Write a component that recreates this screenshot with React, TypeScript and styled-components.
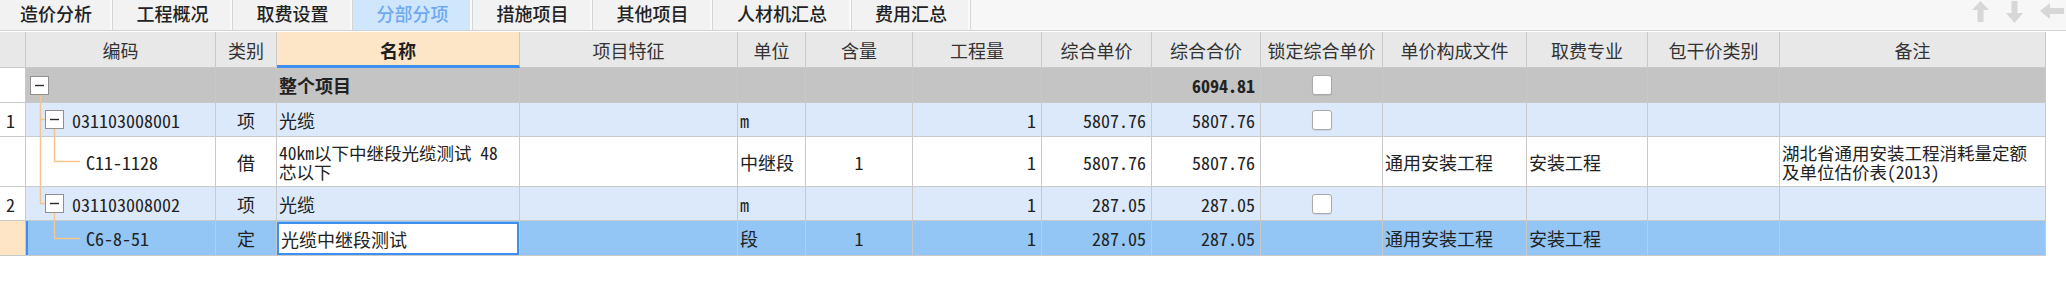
import React from 'react';
import styled, { createGlobalStyle } from 'styled-components';

const GlobalStyle = createGlobalStyle`
  html, body { margin: 0; padding: 0; background: #ffffff; }
  body { font-family: "Noto Sans CJK SC", "Noto Sans", sans-serif; }
`;

const COLS = [26, 190, 61, 243, 218, 68, 107, 129, 110, 109, 122, 144, 121, 132, 266];
const GRID = COLS.map((c) => `${c}px`).join(' ');

const DATA_FONT = `"Noto Sans Mono CJK SC", "Noto Sans CJK SC", "Liberation Mono", monospace`;
const LINE = '#c9c9c9';
const TREE = '#f7c48c';

const Page = styled.div`
  width: 2066px;
  height: 285px;
  overflow: hidden;
  background: #fff;
`;

const TabBar = styled.div`
  display: flex;
  align-items: stretch;
  height: 30px;
  background: #f7f7f7;
  border-bottom: 1px solid #d2d2d2;
`;

const Tab = styled.div<{ $w: number; $active?: boolean }>`
  box-sizing: border-box;
  width: ${(p) => p.$w}px;
  display: flex;
  align-items: center;
  justify-content: center;
  padding-bottom: 5px;
  font-size: 18px;
  font-weight: 500;
  color: ${(p) => (p.$active ? '#6fa9f2' : '#222')};
  background: ${(p) => (p.$active ? '#cfe6fd' : '#f2f2f2')};
  border-right: 1px solid #d6d6d6;
  box-shadow: inset -2px 0 0 #fafafa;
`;

const Arrows = styled.div`
  margin-left: auto;
  display: flex;
  align-items: flex-start;
  gap: 17px;
  padding-top: 1px;
  margin-right: 2px;
`;

const Table = styled.div`
  margin-top: 1px;
  width: 2046px;
  display: flex;
  flex-direction: column;
`;

const Row = styled.div<{ $h: number; $bg: string }>`
  display: grid;
  grid-template-columns: ${GRID};
  height: ${(p) => p.$h}px;
  background: ${(p) => p.$bg};
`;

const HeadCell = styled.div<{ $hot?: boolean }>`
  box-sizing: border-box;
  display: flex;
  align-items: center;
  justify-content: center;
  font-size: 18px;
  color: ${(p) => (p.$hot ? '#1f1f1f' : '#333')};
  font-weight: ${(p) => (p.$hot ? 700 : 400)};
  background: ${(p) => (p.$hot ? '#fde6c8' : '#e8e8e8')};
  border-right: 1px solid ${LINE};
  border-bottom: ${(p) => (p.$hot ? '3px solid #3d8ff0' : `1px solid ${LINE}`)};
  padding-top: ${(p) => (p.$hot ? 2 : 0)}px;
  white-space: nowrap;
`;

const BaseCell = styled.div`
  box-sizing: border-box;
  display: flex;
  align-items: center;
  min-width: 0;
  overflow: hidden;
  white-space: nowrap;
  border-right: 1px solid ${LINE};
  border-bottom: 1px solid ${LINE};
  font-family: ${DATA_FONT};
  font-size: 18px;
  color: #222;
`;

const NumCell = styled(BaseCell)<{ $sel?: boolean }>`
  background: ${(p) => (p.$sel ? '#fde5c6' : '#ffffff')};
  padding-left: 6px;
`;

const CodeCell = styled(BaseCell)<{ $sel?: boolean }>`
  align-items: stretch;
  box-shadow: ${(p) => (p.$sel ? 'inset 2px 0 0 #3d8ff0' : 'none')};
`;

const CodeText = styled.span`
  align-self: center;
  margin-left: 2px;
`;

const TextCell = styled(BaseCell)<{ $bold?: boolean }>`
  justify-content: flex-start;
  padding-left: 2px;
  font-weight: ${(p) => (p.$bold ? 700 : 400)};
`;

const CenterCell = styled(BaseCell)`
  justify-content: center;
`;

const NumberCell = styled(BaseCell)<{ $bold?: boolean }>`
  justify-content: flex-end;
  padding-right: 5px;
  font-weight: ${(p) => (p.$bold ? 700 : 400)};
`;

const EditCell = styled(BaseCell)`
  align-items: stretch;
  padding: 1px 0 0 0;
`;

const EditBox = styled.div`
  flex: 1;
  box-sizing: border-box;
  display: flex;
  align-items: center;
  padding-left: 2px;
  background: #ffffff;
  border: 2px solid #3d8ff0;
`;

const Lines = styled.div`
  display: flex;
  flex-direction: column;
  white-space: nowrap;
`;

const Line = styled.span`
  display: block;
  height: 19px;
  line-height: 19px;
  font-size: 17.5px;
`;

const Check = styled.div`
  box-sizing: border-box;
  width: 20px;
  height: 20px;
  border: 1px solid #a9a9a9;
  border-radius: 3px;
  background: #ffffff;
  box-shadow: 0 1px 1px rgba(0, 0, 0, 0.08);
`;

type TreeKind = 'root' | 'l1first' | 'child' | 'l1last' | 'childLast';

const Box: React.FC<{ x: number; y: number }> = ({ x, y }) => (
  <g>
    <rect x={x + 0.5} y={y + 0.5} width={18} height={18} fill="#fff" stroke="#8f8f8f" />
    <line x1={x + 5} y1={y + 9.5} x2={x + 14} y2={y + 9.5} stroke="#2a2a2a" strokeWidth={1.4} />
  </g>
);

const TreeGlyph: React.FC<{ kind: TreeKind; h: number; w: number }> = ({ kind, h, w }) => {
  const c = Math.round(h / 2) - 1;
  const V = (x: number, y1: number, y2: number) => (
    <line x1={x + 0.5} y1={y1} x2={x + 0.5} y2={y2} stroke={TREE} strokeWidth={1.5} />
  );
  const H = (x1: number, x2: number, y: number) => (
    <line x1={x1} y1={y + 0.5} x2={x2} y2={y + 0.5} stroke={TREE} strokeWidth={1.5} />
  );
  return (
    <svg width={w} height={h - 1} viewBox={`0 0 ${w} ${h - 1}`} style={{ flex: 'none' }}>
      {kind === 'root' && (
        <>
          {V(14, c + 9, h)}
          <Box x={4} y={c - 9} />
        </>
      )}
      {kind === 'l1first' && (
        <>
          {V(14, 0, h)}
          {H(14, 19, c)}
          {V(28, c + 9, h)}
          <Box x={19} y={c - 9} />
        </>
      )}
      {kind === 'child' && (
        <>
          {V(14, 0, h)}
          {V(28, 0, c)}
          {H(28, 54, c)}
        </>
      )}
      {kind === 'l1last' && (
        <>
          {V(14, 0, c)}
          {H(14, 19, c)}
          {V(28, c + 9, h)}
          <Box x={19} y={c - 9} />
        </>
      )}
      {kind === 'childLast' && (
        <>
          {V(28, 0, c)}
          {H(28, 54, c)}
        </>
      )}
    </svg>
  );
};

const ArrowUp = () => (
  <svg width="17" height="21" viewBox="0 0 17 21">
    <polygon points="8.5,0 17,9 11.5,9 11.5,21 5.5,21 5.5,9 0,9" fill="#d7d7d7" />
  </svg>
);
const ArrowDown = () => (
  <svg width="17" height="22" viewBox="0 0 17 22">
    <polygon points="5.5,0 11.5,0 11.5,12 17,12 8.5,22 0,12 5.5,12" fill="#d7d7d7" />
  </svg>
);
const ArrowLeft = () => (
  <svg width="24" height="20" viewBox="0 0 24 20" style={{ marginTop: 2 }}>
    <polygon points="0,8 10,0 10,5 24,5 24,11 10,11 10,16" fill="#d7d7d7" />
  </svg>
);

const TABS: { label: string; w: number; active?: boolean }[] = [
  { label: '造价分析', w: 113 },
  { label: '工程概况', w: 120 },
  { label: '取费设置', w: 120 },
  { label: '分部分项', w: 120, active: true },
  { label: '措施项目', w: 120 },
  { label: '其他项目', w: 120 },
  { label: '人材机汇总', w: 139 },
  { label: '费用汇总', w: 119 },
];

const HEADERS = [
  '', '编码', '类别', '名称', '项目特征', '单位', '含量', '工程量', '综合单价', '综合合价',
  '锁定综合单价', '单价构成文件', '取费专业', '包干价类别', '备注',
];

type RowData = {
  h: number;
  bg: string;
  num: string;
  tree: TreeKind;
  treeW: number;
  code: string;
  type: string;
  name: string | string[];
  bold?: boolean;
  unit: string;
  content: string;
  qty: string;
  price: string;
  total: string;
  lock: boolean;
  file: string;
  major: string;
  note: string | string[];
  selected?: boolean;
};

const ROWS: RowData[] = [
  {
    h: 35, bg: '#c4c4c4', num: '', tree: 'root', treeW: 60, code: '', type: '', name: '整个项目', bold: true,
    unit: '', content: '', qty: '', price: '', total: '6094.81', lock: true, file: '', major: '', note: '',
  },
  {
    h: 34, bg: '#dce9fb', num: '1', tree: 'l1first', treeW: 44, code: '031103008001', type: '项', name: '光缆',
    unit: 'm', content: '', qty: '1', price: '5807.76', total: '5807.76', lock: true, file: '', major: '', note: '',
  },
  {
    h: 50, bg: '#ffffff', num: '', tree: 'child', treeW: 58, code: 'C11-1128', type: '借',
    name: ['40km以下中继段光缆测试 48', '芯以下'], unit: '中继段', content: '1', qty: '1', price: '5807.76',
    total: '5807.76', lock: false, file: '通用安装工程', major: '安装工程',
    note: ['湖北省通用安装工程消耗量定额', '及单位估价表(2013)'],
  },
  {
    h: 34, bg: '#dce9fb', num: '2', tree: 'l1last', treeW: 44, code: '031103008002', type: '项', name: '光缆',
    unit: 'm', content: '', qty: '1', price: '287.05', total: '287.05', lock: true, file: '', major: '', note: '',
  },
  {
    h: 35, bg: '#93c6f5', num: '', tree: 'childLast', treeW: 58, code: 'C6-8-51', type: '定', name: '光缆中继段测试',
    unit: '段', content: '1', qty: '1', price: '287.05', total: '287.05', lock: false, file: '通用安装工程',
    major: '安装工程', note: '', selected: true,
  },
];

const renderText = (v: string | string[]) =>
  Array.isArray(v) ? (
    <Lines>
      {v.map((line, i) => (
        <Line key={i}>{line}</Line>
      ))}
    </Lines>
  ) : (
    v
  );

export default function App() {
  return (
    <Page>
      <GlobalStyle />
      <TabBar>
        {TABS.map((t) => (
          <Tab key={t.label} $w={t.w} $active={t.active}>
            {t.label}
          </Tab>
        ))}
        <Arrows>
          <ArrowUp />
          <ArrowDown />
          <ArrowLeft />
        </Arrows>
      </TabBar>
      <Table>
        <Row $h={36} $bg="#e8e8e8">
          {HEADERS.map((h, i) => (
            <HeadCell key={i} $hot={h === '名称'}>
              {h}
            </HeadCell>
          ))}
        </Row>
        {ROWS.map((r, i) => (
          <Row key={i} $h={r.h} $bg={r.bg}>
            <NumCell $sel={r.selected}>{r.num}</NumCell>
            <CodeCell $sel={r.selected}>
              <TreeGlyph kind={r.tree} h={r.h} w={r.treeW} />
              {r.code && <CodeText>{r.code}</CodeText>}
            </CodeCell>
            <CenterCell>{r.type}</CenterCell>
            {r.selected ? (
              <EditCell>
                <EditBox>{renderText(r.name)}</EditBox>
              </EditCell>
            ) : (
              <TextCell $bold={r.bold}>{renderText(r.name)}</TextCell>
            )}
            <TextCell />
            <TextCell>{r.unit}</TextCell>
            <CenterCell>{r.content}</CenterCell>
            <NumberCell>{r.qty}</NumberCell>
            <NumberCell>{r.price}</NumberCell>
            <NumberCell $bold={r.bold}>{r.total}</NumberCell>
            <CenterCell>{r.lock && <Check />}</CenterCell>
            <TextCell>{r.file}</TextCell>
            <TextCell>{r.major}</TextCell>
            <TextCell />
            <TextCell>{renderText(r.note)}</TextCell>
          </Row>
        ))}
      </Table>
    </Page>
  );
}
